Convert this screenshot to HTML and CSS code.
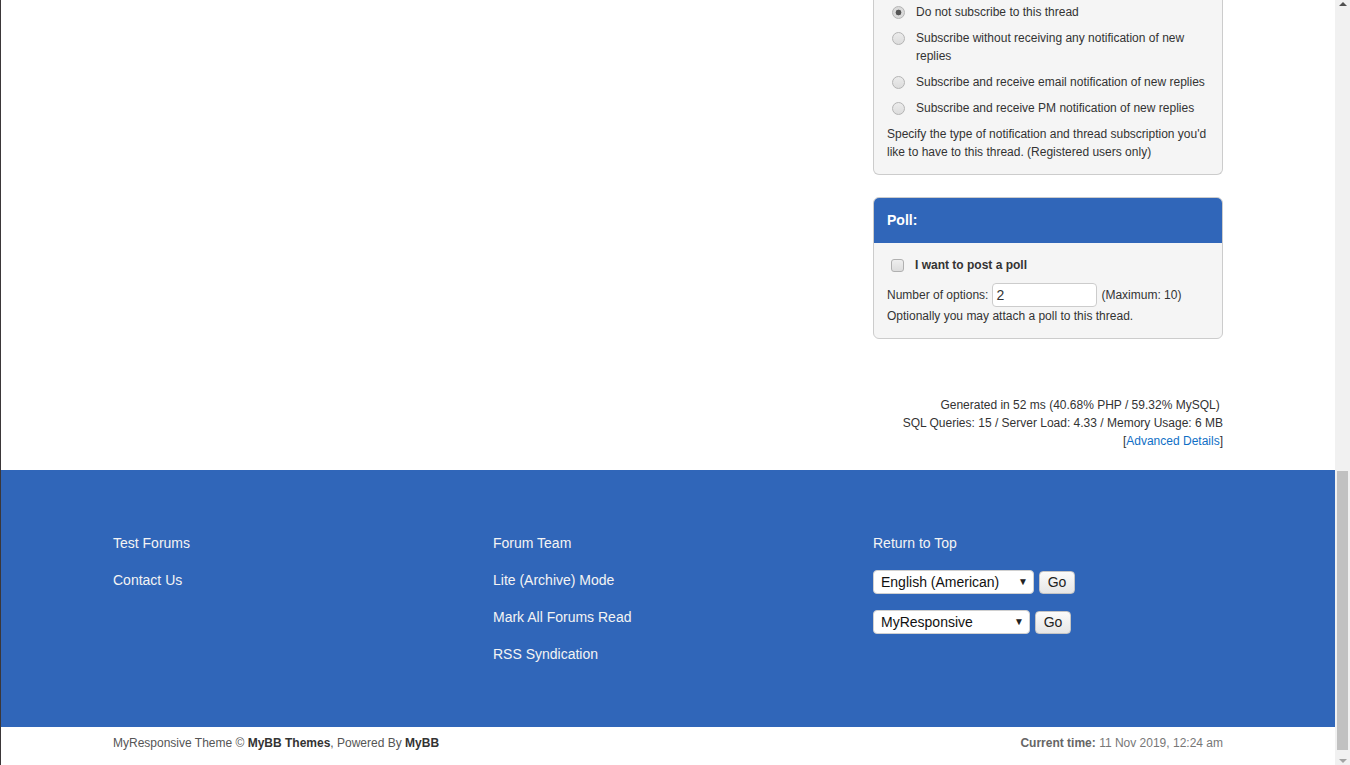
FILE: index.html
```html
<!DOCTYPE html>
<html lang="en">
<head>
<meta charset="utf-8">
<title>New Thread</title>
<link rel="stylesheet" href="styles.css">
</head>
<body>
<div class="page">
  <main class="content">
    <div class="container">
      <div class="side">
        <div class="panel panel-sub">
          <ul class="options">
            <li><input type="radio" name="sub" class="radio" checked><span>Do not subscribe to this thread</span></li>
            <li><input type="radio" name="sub" class="radio"><span>Subscribe without receiving any notification of new replies</span></li>
            <li><input type="radio" name="sub" class="radio"><span>Subscribe and receive email notification of new replies</span></li>
            <li><input type="radio" name="sub" class="radio"><span>Subscribe and receive PM notification of new replies</span></li>
          </ul>
          <p class="desc">Specify the type of notification and thread subscription you'd like to have to this thread. (Registered users only)</p>
        </div>
        <div class="panel panel-poll">
          <div class="panel-head">Poll:</div>
          <div class="panel-body">
            <label class="check-row"><input type="checkbox" class="check"><strong>I want to post a poll</strong></label>
            <div class="num-row">Number of options: <input type="text" class="num" value="2"> (Maximum: 10)</div>
            <div class="hint">Optionally you may attach a poll to this thread.</div>
          </div>
        </div>
      </div>
      <div class="debug">
        <div>Generated in 52 ms (40.68% PHP / 59.32% MySQL)&nbsp;</div>
        <div>SQL Queries: 15 / Server Load: 4.33 / Memory Usage: 6 MB</div>
        <div>[<a href="#" class="link">Advanced Details</a>]</div>
      </div>
    </div>
  </main>
  <footer class="footer">
    <div class="container footer-cols">
      <ul class="fcol">
        <li><a href="#">Test Forums</a></li>
        <li><a href="#">Contact Us</a></li>
      </ul>
      <ul class="fcol">
        <li><a href="#">Forum Team</a></li>
        <li><a href="#">Lite (Archive) Mode</a></li>
        <li><a href="#">Mark All Forums Read</a></li>
        <li><a href="#">RSS Syndication</a></li>
      </ul>
      <ul class="fcol fcol-right">
        <li><a href="#">Return to Top</a></li>
        <li class="sel-row">
          <span class="sel sel-lang"><span class="sel-text">English (American)</span><span class="sel-arrow">&#9660;</span></span>
          <button class="go">Go</button>
        </li>
        <li class="sel-row">
          <span class="sel sel-theme"><span class="sel-text">MyResponsive</span><span class="sel-arrow">&#9660;</span></span>
          <button class="go">Go</button>
        </li>
      </ul>
    </div>
  </footer>
  <div class="bottombar">
    <div class="container bottom-inner">
      <div class="copy">MyResponsive Theme &copy; <b>MyBB Themes</b>, Powered By <b>MyBB</b></div>
      <div class="time"><b>Current time:</b> 11 Nov 2019, 12:24 am</div>
    </div>
  </div>
</div>
<div class="scrollbar">
  <div class="sb-btn sb-up"><span class="tri-up"></span></div>
  <div class="sb-track"><div class="sb-thumb"></div></div>
  <div class="sb-btn sb-down"><span class="tri-down"></span></div>
</div>
</body>
</html>
```

FILE: styles.css
```css
* { box-sizing: border-box; }
html, body { margin: 0; padding: 0; }
body {
  display: flex;
  width: 1350px;
  height: 765px;
  overflow: hidden;
  font-family: "Liberation Sans", Arial, sans-serif;
  font-size: 12px;
  color: #333;
  background: #fff;
}
ul { list-style: none; margin: 0; padding: 0; }
a { text-decoration: none; }

.page {
  width: 1335px;
  height: 765px;
  border-left: 1px solid #3b3739;
  display: flex;
  flex-direction: column;
}
.container {
  width: 1110px;
  margin: 0 auto;
}
.content {
  height: 470px;
}
.content .container {
  display: flex;
  flex-direction: column;
  align-items: flex-end;
}
.side {
  width: 350px;
}
.panel {
  background: #f5f5f5;
  border: 1px solid #ccc;
}
.panel-sub {
  border-top: none;
  border-radius: 0 0 6px 6px;
  padding: 3px 13px 13px;
}
.options li {
  display: flex;
  align-items: flex-start;
  line-height: 18px;
  padding-left: 5px;
  margin-bottom: 8px;
}
.radio {
  appearance: none;
  -webkit-appearance: none;
  width: 13px;
  height: 13px;
  margin: 3px 11px 0 0;
  flex: none;
  border: 1px solid #b4b4b4;
  border-radius: 50%;
  background: linear-gradient(#ececec, #dcdcdc);
}
.radio:checked {
  background: radial-gradient(circle, #555 0 2.6px, #dadada 3.2px);
}
.desc {
  margin: 0;
  line-height: 18px;
}
.panel-poll {
  margin-top: 22px;
  border-radius: 6px;
  overflow: hidden;
}
.panel-head {
  background: #3066b9;
  color: #fff;
  font-weight: bold;
  font-size: 14px;
  height: 45px;
  line-height: 45px;
  padding-left: 13px;
}
.panel-body {
  padding: 13px;
  line-height: 18px;
}
.check-row {
  display: flex;
  align-items: center;
  height: 18px;
  padding-left: 4px;
}
.check {
  appearance: none;
  -webkit-appearance: none;
  width: 13px;
  height: 13px;
  margin: 0 11px 0 0;
  border: 1px solid #b0b0b0;
  border-radius: 3px;
  background: linear-gradient(#eeeeee, #dddddd);
}
.num-row {
  margin-top: 9px;
  display: flex;
  align-items: center;
  height: 24px;
}
.num {
  width: 105px;
  height: 24px;
  margin: 0 4px;
  border: 1px solid #ccc;
  border-radius: 4px;
  padding: 0 3px;
  font-family: "Liberation Sans", Arial, sans-serif;
  font-size: 14px;
  color: #333;
  background: #fff;
}

.debug {
  margin-top: 57px;
  text-align: right;
  line-height: 18px;
}
.link { color: #0f6fc6; }

.footer {
  height: 257px;
  background: #3066b9;
  padding-top: 63px;
}
.footer-cols {
  display: grid;
  grid-template-columns: 380px 380px 1fr;
}
.fcol {
  display: flex;
  flex-direction: column;
  gap: 17px;
  font-size: 14px;
  line-height: 20px;
}
.fcol a { color: #f4f4f4; }
.fcol-right { gap: 0; }
.sel-row {
  display: flex;
  align-items: center;
  margin-top: 16px;
}
.fcol-right li:nth-child(2) { margin-top: 17px; }
.sel {
  position: relative;
  display: flex;
  align-items: center;
  height: 24px;
  background: #fff;
  border: 1px solid #d0d0d0;
  border-radius: 4px;
  padding-left: 7px;
  color: #111;
  font-size: 14px;
}
.sel-lang { width: 161px; }
.sel-theme { width: 157px; }
.sel-arrow {
  position: absolute;
  right: 5px;
  top: 5px;
  font-size: 10px;
  line-height: 12px;
  color: #222;
}
.go {
  margin-left: 5px;
  height: 23px;
  width: 36px;
  padding: 0;
  border: 1px solid #c4c4c4;
  border-radius: 4px;
  background: linear-gradient(#fbfbfb, #e6e6e6);
  font-family: "Liberation Sans", Arial, sans-serif;
  font-size: 14px;
  color: #222;
}

.bottombar {
  height: 38px;
  padding-top: 7px;
}
.bottom-inner {
  display: flex;
  justify-content: space-between;
  line-height: 18px;
}
.copy { color: #555; }
.copy b { color: #333; }
.time { color: #777; }
.time b { color: #666; }

.scrollbar {
  width: 15px;
  height: 765px;
  background: #f1f1f1;
  display: flex;
  flex-direction: column;
}
.sb-btn {
  height: 15px;
  display: flex;
  justify-content: center;
  align-items: center;
}
.tri-up {
  width: 0; height: 0;
  border-left: 4px solid transparent;
  border-right: 4px solid transparent;
  border-bottom: 4px solid #505050;
  margin-top: -7px;
}
.tri-down {
  width: 0; height: 0;
  border-left: 4px solid transparent;
  border-right: 4px solid transparent;
  border-top: 4px solid #a3a3a3;
  margin-top: 7px;
}
.sb-track {
  flex: 1;
  padding: 456px 2px 0;
}
.sb-thumb {
  height: 279px;
  background: #c1c1c1;
}
```
